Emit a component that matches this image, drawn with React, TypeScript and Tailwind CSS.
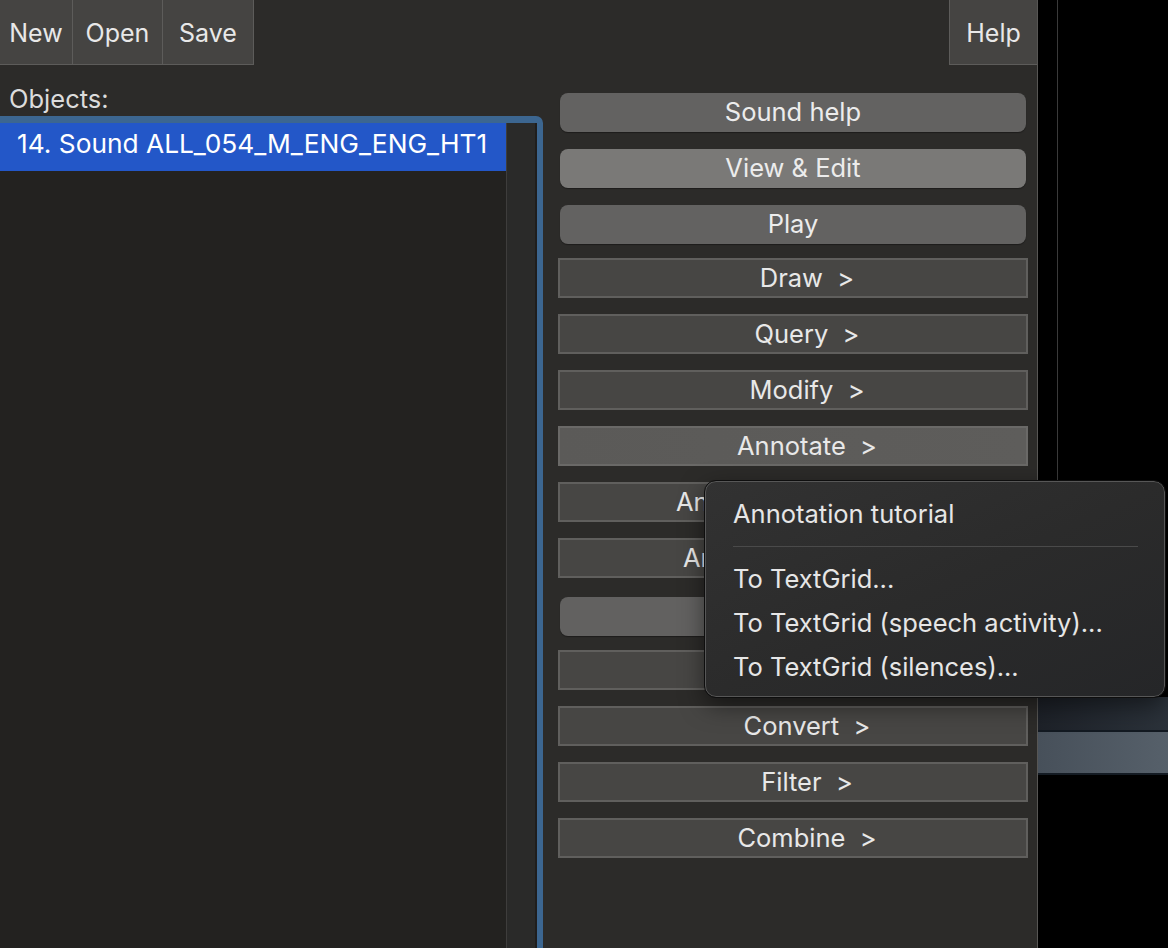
import React from 'react';

type Action = {
  label: string;
  kind: 'round' | 'menu';
  gap: string;
  tone?: string;
};

// vertical gaps copied from the screenshot
const actions: Action[] = [
  { label: 'Sound help', kind: 'round', gap: 'mt-[28px]', tone: 'bg-[#636261]' },
  { label: 'View & Edit', kind: 'round', gap: 'mt-[17px]', tone: 'bg-[#7a7977]' },
  { label: 'Play', kind: 'round', gap: 'mt-[17px]', tone: 'bg-[#636261]' },
  { label: 'Draw', kind: 'menu', gap: 'mt-[14px]' },
  { label: 'Query', kind: 'menu', gap: 'mt-[16px]' },
  { label: 'Modify', kind: 'menu', gap: 'mt-[16px]' },
  { label: 'Annotate', kind: 'menu', gap: 'mt-[16px]', tone: 'active' },
  { label: 'Analyse periodicity', kind: 'menu', gap: 'mt-[16px]' },
  { label: 'Analyse spectrum', kind: 'menu', gap: 'mt-[16px]' },
  { label: 'To Intensity...', kind: 'round', gap: 'mt-[19px]', tone: 'bg-[#626160]' },
  { label: 'Manipulate', kind: 'menu', gap: 'mt-[14px]' },
  { label: 'Convert', kind: 'menu', gap: 'mt-[16px]' },
  { label: 'Filter', kind: 'menu', gap: 'mt-[16px]' },
  { label: 'Combine', kind: 'menu', gap: 'mt-[16px]' },
];

function ActionButton({ action }: { action: Action }) {
  if (action.kind === 'round') {
    return (
      <div
        className={`${action.gap} mx-[2px] h-[39px] rounded-[8px] ${action.tone} shadow-[0_1px_1px_rgba(0,0,0,0.35)] flex items-center justify-center text-[25.5px] text-[#ececec] shrink-0`}
      >
        {action.label}
      </div>
    );
  }
  const active = action.tone === 'active';
  return (
    <div
      className={`${action.gap} h-[40px] border-2 shrink-0 flex items-center justify-center pl-[28px] text-[25.5px] text-[#e8e8e8] whitespace-pre ${
        active
          ? 'border-[#6a6967] bg-gradient-to-r from-[#5b5a58] to-[#5e5d5b]'
          : 'border-[#605f5d] bg-[#474644]'
      }`}
    >
      {action.label + '  >'}
    </div>
  );
}

function ToolbarButton({ label, className }: { label: string; className: string }) {
  return (
    <div
      className={`h-full flex items-center justify-center pt-[3px] bg-[#454442] border-[#5d5c5a] text-[25px] text-[#e8e8e8] ${className}`}
    >
      {label}
    </div>
  );
}

const menuItems = ['To TextGrid...', 'To TextGrid (speech activity)...', 'To TextGrid (silences)...'];

export default function App() {
  return (
    <div className="relative w-[1168px] h-[948px] overflow-hidden bg-black flex font-['Inter','Noto_Sans',sans-serif] select-none">
      {/* Praat objects window */}
      <div className="w-[1038px] h-full bg-[#2c2b29] border-r border-[#575654] flex flex-col overflow-hidden shrink-0">
        <div className="h-[65px] flex shrink-0">
          <ToolbarButton label="New" className="w-[73px] border-r border-b" />
          <ToolbarButton label="Open" className="w-[90px] border-r border-b" />
          <ToolbarButton label="Save" className="w-[91px] border-r border-b" />
          <div className="flex-1" />
          <ToolbarButton label="Help" className="w-[88px] border-l border-b" />
        </div>

        <div className="flex flex-1 min-h-0">
          <div className="ml-[-7px] w-[550px] flex flex-col shrink-0">
            <div className="h-[51px] shrink-0 pt-[19px] pl-[16px] text-[25.5px] leading-[30px] text-[#dcdcdc]">Objects:</div>
            <div className="h-[850px] rounded-[7px] border-[6px] border-t-[7px] border-[#3c6690] flex overflow-hidden shrink-0">
              <div className="w-[507px] bg-[#232220]">
                <div className="h-[48px] bg-[#2357c8] flex items-center pl-[18px] pb-[7px] text-[26.3px] text-white whitespace-nowrap">
                  14. Sound ALL_054_M_ENG_ENG_HT1
                </div>
              </div>
              <div className="flex-1 bg-[#2a2a29] border-l border-[#3e3d3c] border-r-2 border-r-[#1f1e1d]" />
            </div>
          </div>

          <div className="ml-[15px] w-[470px] flex flex-col">
            {actions.map((a) => (
              <ActionButton key={a.label} action={a} />
            ))}
          </div>
        </div>
      </div>

      {/* desktop behind */}
      <div className="flex-1 flex flex-col">
        <div className="h-[697px] shrink-0 flex">
          <div className="ml-[19px] w-px h-full bg-[#3a3a3a]" />
        </div>
        <div className="h-[33px] shrink-0 bg-gradient-to-r from-[#1d2128] to-[#2b323a]" />
        <div className="h-[2px] shrink-0 bg-[#131a22]" />
        <div className="h-[41px] shrink-0 bg-gradient-to-r from-[#47505a] to-[#56606a]" />
        <div className="h-[2px] shrink-0 bg-[#141b23]" />
      </div>

      {/* Annotate submenu */}
      <div className="absolute left-[705px] top-[481px] w-[460px] h-[216px] rounded-[11px] border border-[#575757] outline outline-1 outline-[#0e0e0e] bg-gradient-to-br from-[#323232] via-[#2b2b2b] to-[#252628] shadow-[0_8px_24px_rgba(0,0,0,0.5)] pt-[10px] text-[25.5px] text-[#e6e6e6]">
        <div className="h-[44px] flex items-center pl-[27px]">Annotation tutorial</div>
        <div className="h-[21px] flex items-center pl-[27px] pr-[26px]">
          <div className="h-px w-full bg-[#4a4a4a]" />
        </div>
        {menuItems.map((m) => (
          <div key={m} className="h-[44px] flex items-center pl-[27px] whitespace-nowrap">
            {m}
          </div>
        ))}
      </div>
    </div>
  );
}
